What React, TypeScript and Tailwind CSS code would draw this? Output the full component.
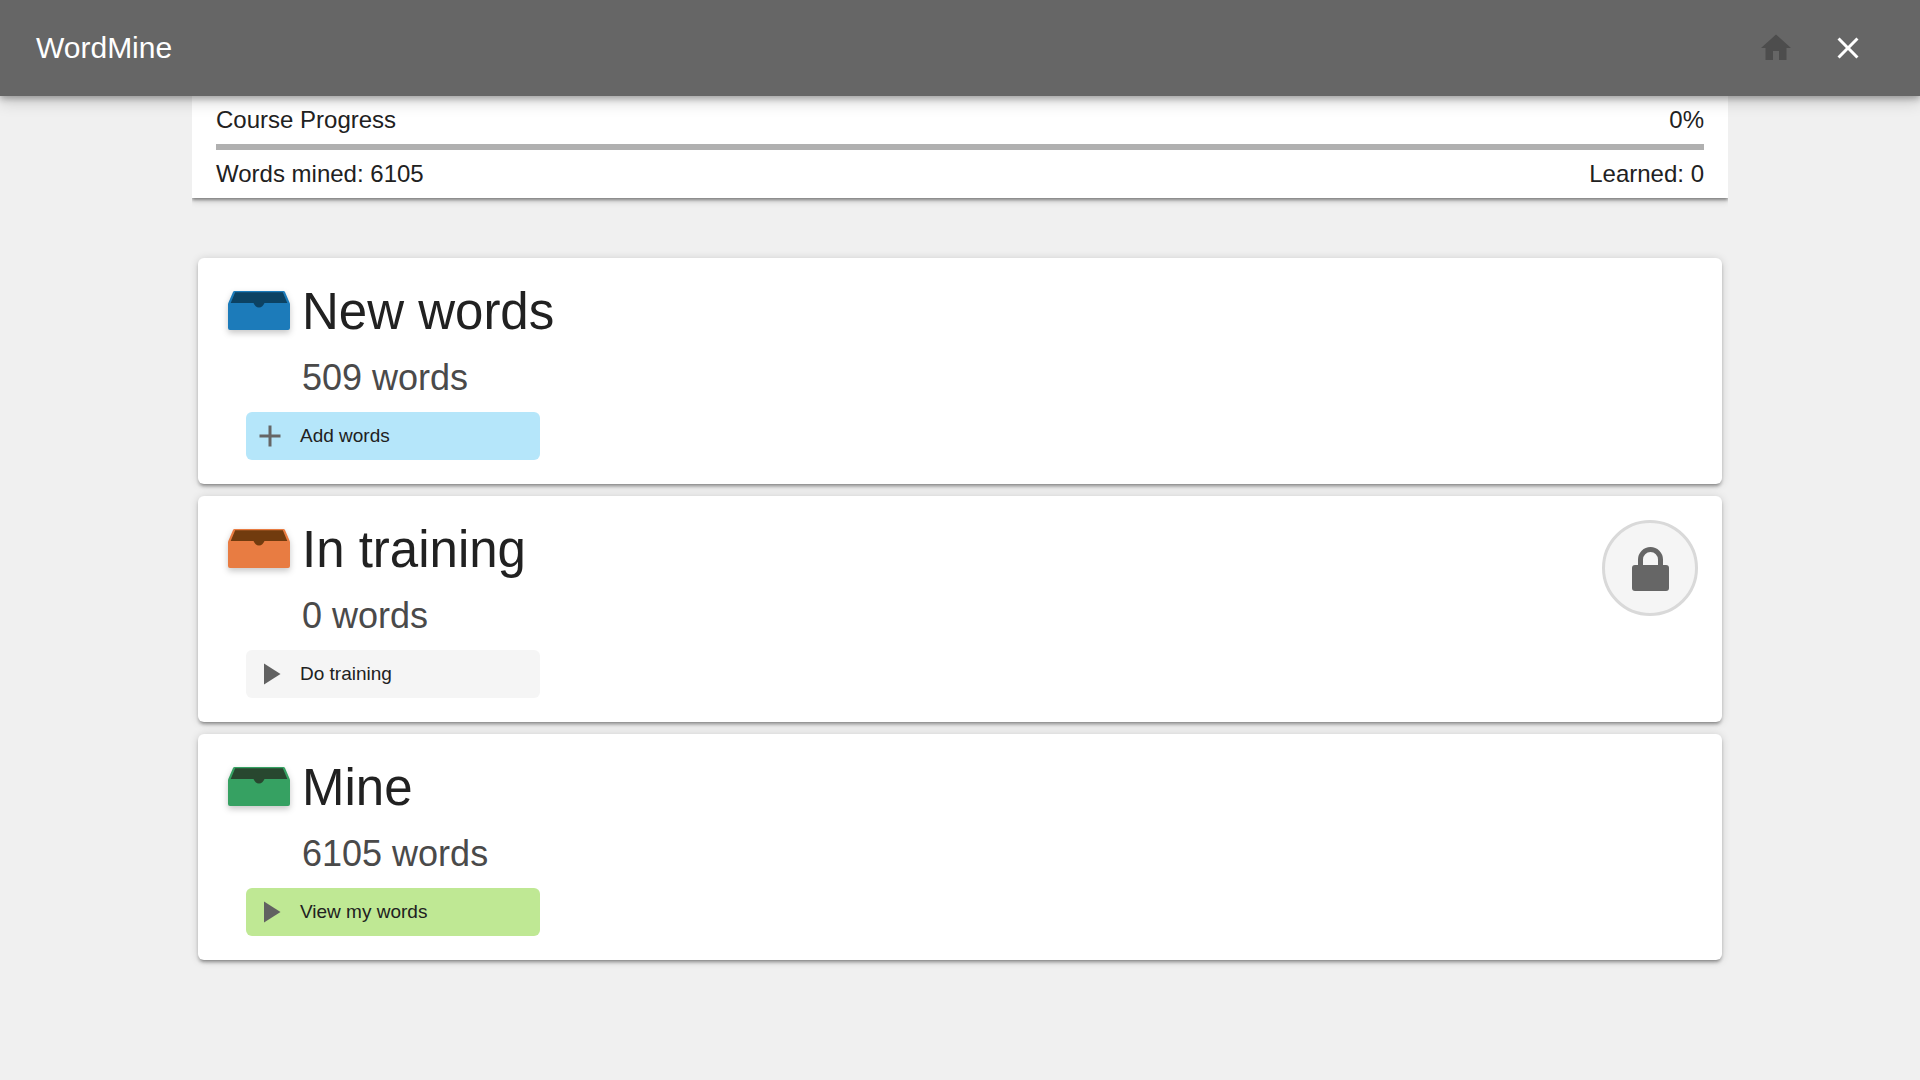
import type { ReactNode } from "react";
import { MdAdd, MdClose, MdHome, MdPlayArrow } from "react-icons/md";

const stages = [
  {
    title: "New words",
    count: 509,
    action: "Add words",
    icon: <MdAdd className="size-9 text-[#666]" />,
    button: "bg-[#b5e6fa]",
    tray: "#1c7bba",
    inside: "#0c4263",
    locked: false,
  },
  {
    title: "In training",
    count: 0,
    action: "Do training",
    icon: <MdPlayArrow className="size-9 text-[#616161]" />,
    button: "bg-[#f5f5f5]",
    tray: "#e87c42",
    inside: "#713b0e",
    locked: true,
  },
  {
    title: "Mine",
    count: 6105,
    action: "View my words",
    icon: <MdPlayArrow className="size-9 text-[#616161]" />,
    button: "bg-[#bfe894]",
    tray: "#36a162",
    inside: "#28472f",
    locked: false,
  },
];

const Tray = ({ color, inside }: { color: string; inside: string }) => (
  <svg
    viewBox="0 0 62 42"
    className="w-[62px] h-[42px] shrink-0 drop-shadow-[0_3px_3px_rgba(0,0,0,0.22)]"
    aria-hidden="true"
  >
    <path
      d="M6.5 0H55.5Q56.5 0 57 1L61.5 11.5Q62 12.500 62 13.500V37Q62 39 60 39H2Q0 39 0 37V13.500Q0 12.500 .5 11.500L5 1Q5.500 0 6.500 0Z"
      fill={color}
    />
    <path
      d="M7.200 1.300H54.800L59.300 12H36.500C35.300 14.500 33.700 16.500 31 16.500S26.700 14.500 25.500 12H2.700Z"
      fill={inside}
    />
  </svg>
);

const LockBadge = () => (
  <div
    role="img"
    aria-label="Locked"
    className="size-24 shrink-0 rounded-full border-3 border-[#d9d9d9] bg-[#f5f5f5] flex items-center justify-center"
  >
    <svg viewBox="-1 -2 38 46" className="w-[38px] h-[46px]">
      <path d="M8.500 20V12.500a10 10 0 0 1 20 0V20" fill="none" stroke="#666" strokeWidth="5" />
      <rect y="18" width="37" height="26" rx="3" fill="#666" />
    </svg>
  </div>
);

const Row = ({ children }: { children: ReactNode }) => (
  <div className="flex justify-between text-2xl leading-8">{children}</div>
);

const App = () => {
  return (
    <div className="min-h-screen bg-[#f0f0f0] text-[#212121] font-['Liberation_Sans',Arial,sans-serif]">
      <header className="relative z-10 h-24 px-9 flex items-center justify-between bg-[#666] text-white shadow-[0_3px_6px_rgba(0,0,0,0.26),0_6px_15px_rgba(0,0,0,0.16)]">
        <h1 className="text-3xl">WordMine</h1>
        <nav className="flex">
          <button aria-label="Home" className="size-18 flex items-center justify-center text-[#4d4d4d]">
            <MdHome className="size-9" />
          </button>
          <button aria-label="Close" className="size-18 flex items-center justify-center">
            <MdClose className="size-9" />
          </button>
        </nav>
      </header>

      <main className="w-4/5 mx-auto">
        {/* side shadows are cut off so the panel hangs straight from the header */}
        <section className="bg-white px-6 py-2 shadow-[0_2px_3px_rgba(0,0,0,0.4),0_4px_6px_rgba(0,0,0,0.12)] [clip-path:inset(0_0_-20px_0)]">
          <Row>
            <span>Course Progress</span>
            <span>0%</span>
          </Row>
          <div
            role="progressbar"
            aria-label="Course Progress"
            aria-valuenow={0}
            className="h-[6px] my-2 bg-[#b0b0b0]"
          />
          <Row>
            <span>Words mined: 6105</span>
            <span>Learned: 0</span>
          </Row>
        </section>

        <div className="mt-15 px-[6px] flex flex-col gap-3">
          {stages.map((stage) => (
            <section
              key={stage.title}
              className="bg-white rounded-md p-6 flex justify-between shadow-[0_4px_2px_-3px_rgba(0,0,0,0.2),0_3px_3px_rgba(0,0,0,0.2),0_1px_8px_rgba(0,0,0,0.16)]"
            >
              <div>
                <div className="flex items-center pl-[6px] gap-3">
                  <Tray color={stage.tray} inside={stage.inside} />
                  <h2 className="text-[51px] leading-[60px]">{stage.title}</h2>
                </div>
                <p className="mt-3 pl-20 text-4xl leading-[48px] text-[#4a4a4a]">{stage.count} words</p>
                <button
                  className={`mt-[10px] ml-6 w-[294px] h-12 pl-[6px] rounded-md flex items-center gap-3 text-[19px] ${stage.button}`}
                >
                  {stage.icon}
                  {stage.action}
                </button>
              </div>
              {stage.locked && <LockBadge />}
            </section>
          ))}
        </div>
      </main>
    </div>
  );
};

export default App;
